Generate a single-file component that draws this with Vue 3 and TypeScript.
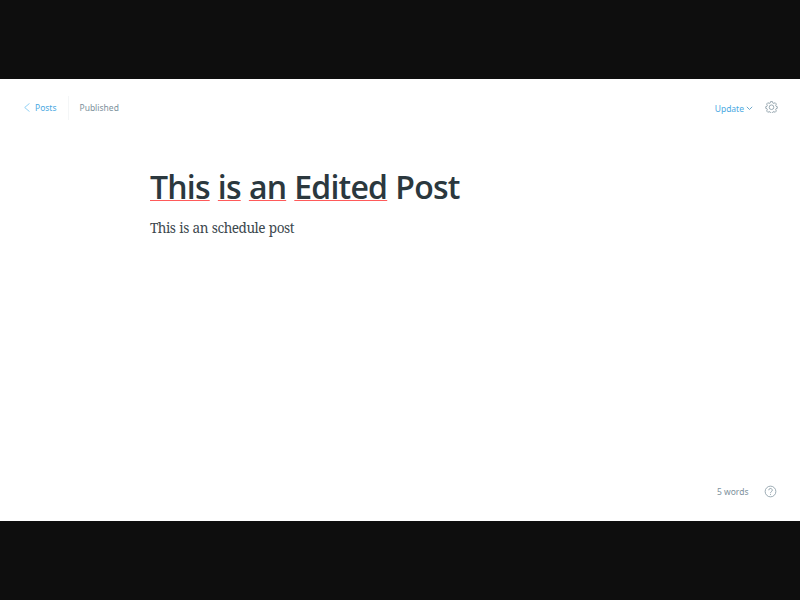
<script setup lang="ts">
const words: string[] = ['This', 'is', 'an', 'Edited']
</script>
<template>
  <div class="screen">
    <main class="editor">
      <header class="bar">
        <div class="left">
          <a class="back"><svg width="6" height="9" viewBox="0 0 6 9"><path d="M5.5 .4 .7 4.5l4.8 4.1" /></svg><span class="t posts">Posts</span></a>
          <span class="t status">Published</span>
        </div>
        <div class="right">
          <a class="update"><span class="t upd">Update</span><svg width="7" height="5" viewBox="0 0 7 5"><path d="M.8 .8 3.5 3.5 6.2 .8" /></svg></a>
          <svg class="gear" width="13" height="12" viewBox="-1 0 26 24"><path d="M10 1.2h4l.8 3 1.7.7 2.8-1.5 2.5 2.6-1.5 2.8.7 1.7 2.5.8v3.4l-2.5.8-.7 1.7 1.5 2.8-2.5 2.6-2.8-1.5-1.7.7-.8 2.8h-4l-.8-2.8-1.7-.7-2.8 1.5L2.2 20l1.5-2.8-.7-1.7-2.5-.8v-3.4l2.5-.8.7-1.7L2.2 6l2.5-2.6 2.8 1.5 1.7-.7z" /><circle cx="12" cy="12.5" r="4.6" /></svg>
        </div>
      </header>
      <article class="post">
        <h1><template v-for="w in words" :key="w"><span class="bad">{{ w }}</span>{{ ' ' }}</template><span>Post</span></h1>
        <p><span>This is an schedule post</span></p>
      </article>
      <footer class="foot">
        <span class="t count">5 words</span>
        <svg width="13" height="13" viewBox="-1 -1 26 26"><circle cx="12" cy="12" r="10.7" /><path d="M8.5 9.5a3.5 3.5 0 1 1 5 3.1Q12 13.4 12 15.3M12 17v1.8" /></svg>
      </footer>
    </main>
  </div>
</template>
<style>
body { margin: 0; background: #0e0e0e; }
</style>
<style scoped>
.screen { width: 800px; height: 600px; box-sizing: border-box; padding: 79px 0; background: #0e0e0e; }
.editor { height: 442px; background: #fff; display: flex; flex-direction: column; font-family: "Noto Sans", sans-serif; }
.bar { height: 57px; display: flex; justify-content: space-between; padding: 0 22px 0 24px; align-items: center; box-sizing: border-box; }
.left, .right, .back, .update { display: flex; align-items: center; }
.t { font-size: 8.5px; line-height: 12px; white-space: nowrap; }
svg { fill: none; stroke: #8497a1; stroke-width: 1.6; }
.back svg { stroke: #75c5f1; stroke-width: .8; }
.update svg { stroke: #6fa9ca; stroke-width: 1; margin-left: 1.5px; }
.back, .update { color: #4ba9e2; }
.update { padding-top: 2px; }
.posts { margin-left: 5px; }
.left .back { padding-right: 11px; height: 24px; border-right: 1px solid #f4f6f7; }
.status { margin-left: 11px; color: #7d919c; }
.gear { margin: 0 0 1px 12.5px; }
.post { flex: 1; padding-left: 150px; }
h1 { margin: 29px 0 0; font: 600 32px/44px "Open Sans", sans-serif; letter-spacing: -.8px; word-spacing: .6px; color: #2b383e; white-space: nowrap; }
.bad { text-decoration: underline #ff5a5a 1px; text-underline-offset: 1px; text-decoration-skip-ink: none; }
p { margin: 9px 0 0; font: 13.6px/20px "Noto Serif", "Liberation Serif", serif; letter-spacing: -.5px; word-spacing: .8px; color: #3c484e; white-space: nowrap; }
.foot { height: 59px; box-sizing: border-box; padding: 0 23px 0 0; display: flex; justify-content: flex-end; align-items: center; gap: 15.5px; }
.count { color: #7d919c; }
</style>
